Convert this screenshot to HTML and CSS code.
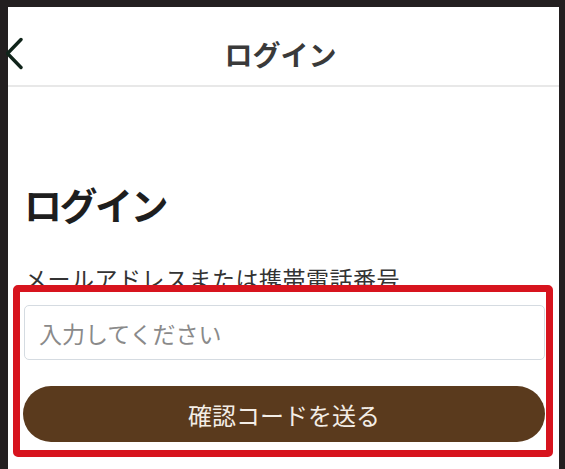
FILE: index.html
```html
<!DOCTYPE html>
<html lang="ja">
<head>
    <meta charset="UTF-8">
    <meta name="viewport" content="width=device-width, initial-scale=1.0">
    <title>ログイン</title>
    <link rel="stylesheet" href="styles.css">
</head>
<body>
    <div class="phone">
        <header class="topbar">
            <button class="back" aria-label="戻る">
                <svg width="18" height="33" viewBox="0 0 18 33">
                    <polyline points="15,2.5 1.5,16.5 15,30.5" fill="none" stroke="#10241a" stroke-width="3.4" stroke-linecap="round" stroke-linejoin="round"/>
                </svg>
            </button>
            <div class="topbar-title">ログイン</div>
            <div></div>
        </header>

        <main class="content">
            <h1 class="page-title">ログイン</h1>
            <label class="field-label" for="account">メールアドレスまたは携帯電話番号</label>
            <div class="highlight">
                <input type="text" id="account" class="field-input" placeholder="入力してください">
                <button class="send-btn">確認コードを送る</button>
            </div>
        </main>
    </div>
</body>
</html>
```

FILE: styles.css
```css
* {
    box-sizing: border-box;
}

body {
    margin: 0;
    background-color: #fff;
    font-family: "Noto Sans CJK JP", "Noto Sans", sans-serif;
}

.phone {
    min-height: 100vh;
    border-top: 7px solid #231f20;
    border-left: 8px solid #231f20;
    border-right: 6px solid #231f20;
    background-color: #fff;
}

.topbar {
    display: grid;
    grid-template-columns: 1fr auto 1fr;
    align-items: center;
    height: 80px;
    padding-top: 15px;
    border-bottom: 2px solid #e8e8e8;
}

.back {
    justify-self: start;
    display: flex;
    padding: 0;
    margin: 0 0 0 -2px;
    border: none;
    background: none;
    cursor: pointer;
}

.topbar-title {
    margin-right: 6px;
    font-size: 28px;
    font-weight: 700;
    line-height: 32px;
    color: #3a3a3a;
}

.content {
    padding: 95px 14px 0 16px;
}

.page-title {
    margin: 0;
    font-size: 38px;
    font-weight: 700;
    line-height: 44px;
    letter-spacing: -2.5px;
    color: #1e1e1e;
}

.field-label {
    display: block;
    margin-top: 36px;
    font-size: 23px;
    line-height: 32px;
    letter-spacing: 0.5px;
    color: #333;
}

/* red frame drawn over the form */
.highlight {
    position: relative;
    display: flex;
    flex-direction: column;
    gap: 26px;
    margin: -9px -8px 0 -11px;
    padding: 13px 1px 8px 3px;
    border: 7px solid #d7141e;
    border-radius: 5px;
}

.field-input {
    height: 55px;
    margin-left: 1px;
    padding: 0 14px;
    border: 1.5px solid #d5dbe1;
    border-radius: 5px;
    font-family: inherit;
    font-size: 23px;
    color: #333;
    background-color: #fff;
}

.field-input::placeholder {
    color: #8a8a8a;
}

.send-btn {
    height: 56px;
    border: none;
    border-radius: 28px;
    background-color: #5a3a1d;
    color: #f3ede6;
    font-family: inherit;
    font-size: 24px;
    cursor: pointer;
}
```
